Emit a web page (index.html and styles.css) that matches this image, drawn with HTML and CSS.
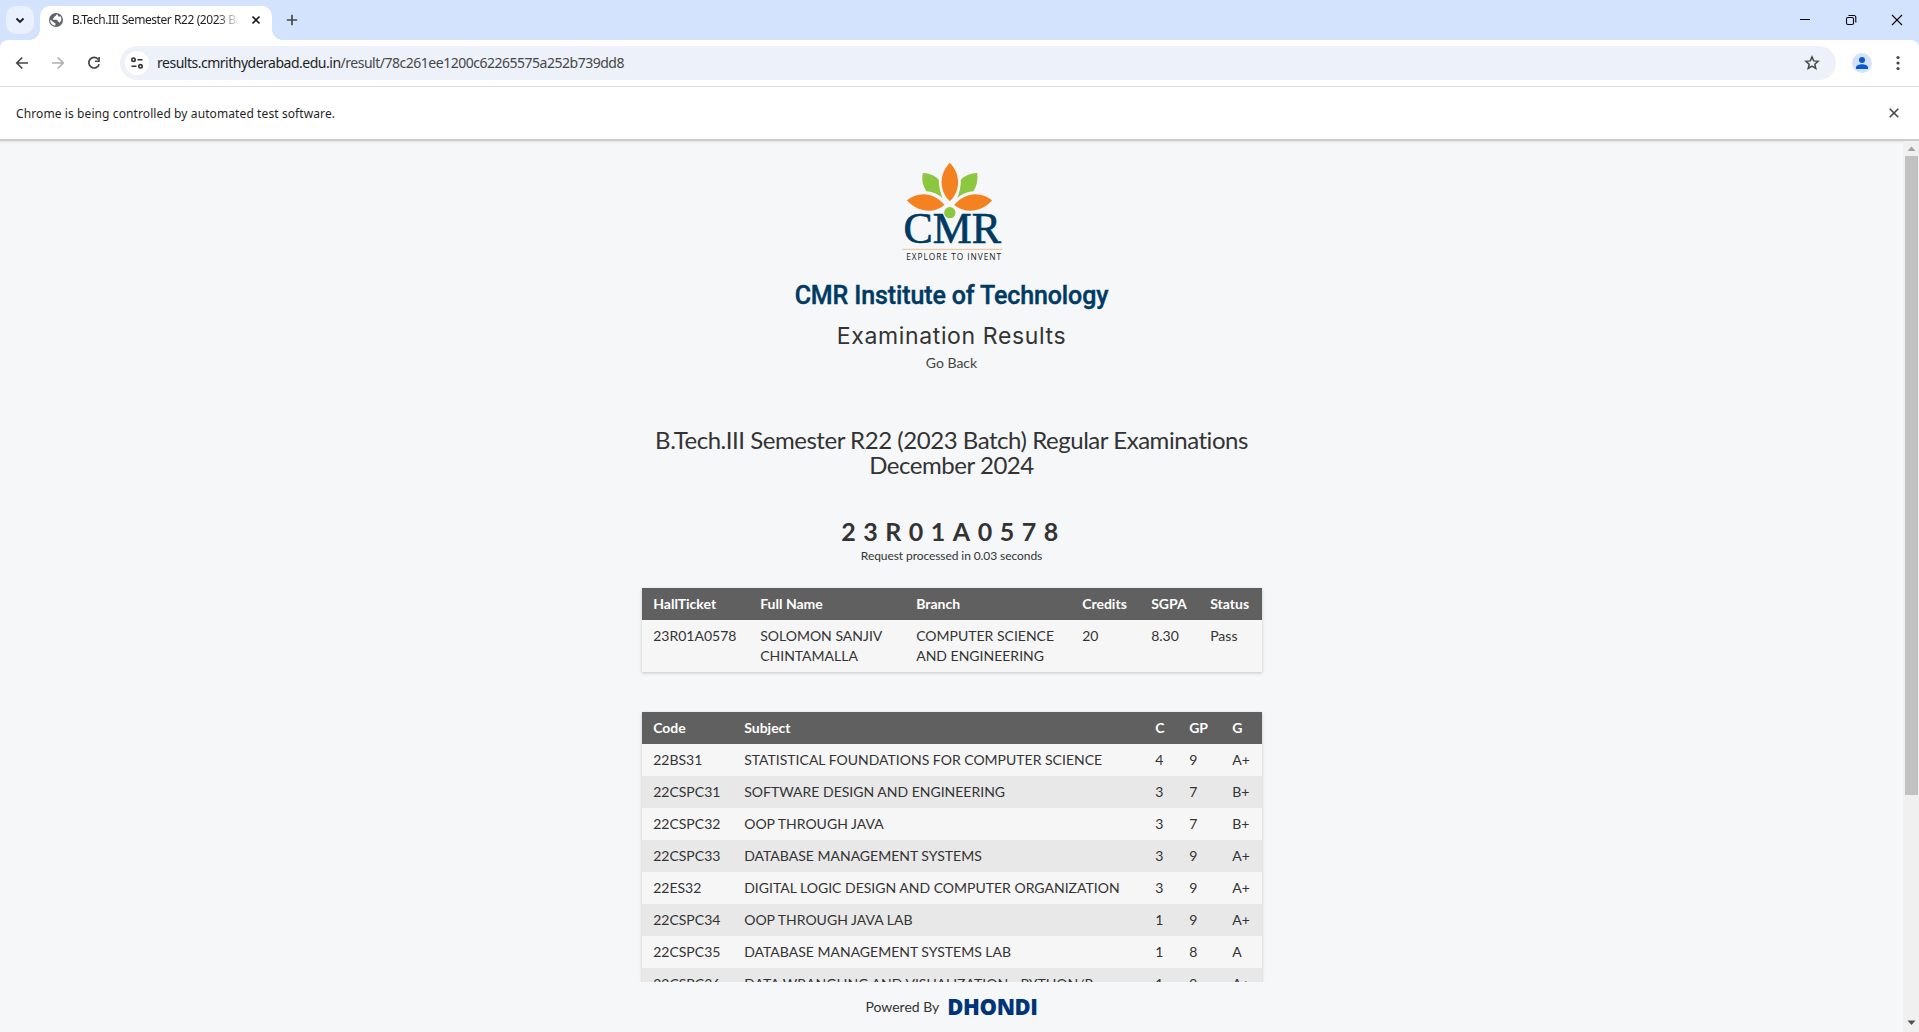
FILE: index.html
```html
<!DOCTYPE html>
<html lang="en">
<head>
<meta charset="utf-8">
<title>B.Tech.III Semester R22 (2023 Batch)</title>
<link rel="stylesheet" href="styles.css">
</head>
<body>
<div class="window">
  <header class="tabstrip">
    <div class="tab-search"><svg width="28" height="28"><path d="M10.5 12.5 14 16l3.500-3.500" fill="none" stroke="#1f1f1f" stroke-width="1.900"/></svg></div>
    <div class="tab">
      <svg class="favicon" width="14" height="14" viewBox="0 0 14 14"><circle cx="7" cy="7" r="7" fill="#5f6368"/><path d="M8.300 1.300C6.500 1.600 7.500 3 6.100 3.300 4.700 3.600 5.500 5 4.100 5.200V6.700H7.500C9.200 7 8 8.600 9.800 8.700L10.500 10C12.500 8.300 13.200 5.500 11.500 3.200 10.600 3.700 9 3.800 9.100 2.700ZM1.300 6.400 4.900 9.600 6.400 10.300V12.600C3 12.400 1 9.600 1.300 6.400Z" fill="#fff"/></svg>
      <span class="tab-title">B.Tech.III Semester R22 (2023 Batch)</span>
      <svg class="tab-close" width="10" height="10"><path d="m1.500 1.500 7 7m0-7-7 7" stroke="#1f1f1f" stroke-width="1.700"/></svg>
    </div>
    <svg class="new-tab" width="12" height="12"><path d="M6 .8v10.400M.8 6h10.400" stroke="#474747" stroke-width="1.700"/></svg>
    <div class="window-buttons">
      <svg width="46" height="40"><path d="M18 19.500h10" stroke="#000"/></svg>
      <svg width="46" height="40" fill="none" stroke="#000" stroke-width="1.100"><rect x="18.500" y="17.500" width="7" height="7" rx="1.500"/><path d="M20.500 15.500h5.500a1.800 1.800 0 0 1 1.800 1.800v5.200"/></svg>
      <svg width="46" height="40"><path d="m18 15 10 10m0-10-10 10" stroke="#000" stroke-width="1.100"/></svg>
    </div>
  </header>
  <div class="toolbar">
    <div class="nav">
      <svg width="36" height="36"><path d="M24 18H13m5.300-5.500L12.800 18l5.500 5.500" fill="none" stroke="#474747" stroke-width="1.700"/></svg>
      <svg width="36" height="36"><path d="M12 18h11m-5.300-5.500 5.500 5.500-5.500 5.500" fill="none" stroke="#b0b0b0" stroke-width="1.700"/></svg>
      <svg width="36" height="36"><path d="M22.400 14.500A5.300 5.300 0 1 0 23.200 19.300" fill="none" stroke="#474747" stroke-width="1.700"/><path d="M23.900 12v5h-5v-1.600h3.400V12z" fill="#474747"/></svg>
    </div>
    <div class="omnibox">
      <svg class="site-info" width="24" height="24"><circle cx="12" cy="12" r="12" fill="#fff"/><g fill="none" stroke="#303030" stroke-width="1.600"><circle cx="8.500" cy="8.700" r="1.700"/><path d="M12.500 8.700h5M6.500 15.300h5"/><circle cx="15.500" cy="15.300" r="1.700"/></g></svg>
      <span class="url"><b>results.cmrithyderabad.edu.in</b>/result/78c261ee1200c62265575a252b739dd8</span>
      <svg class="star" width="16" height="16" viewBox="0 0 16 16"><path d="m8 1.900 1.700 4 4.400.4-3.300 2.900 1 4.300L8 11.200l-3.800 2.300 1-4.300-3.300-2.900 4.400-.4Z" fill="none" stroke="#474747" stroke-width="1.500"/></svg>
    </div>
    <svg class="avatar" width="20" height="20"><circle cx="10" cy="10" r="10" fill="#d3e3fd"/><circle cx="10" cy="7" r="3" fill="#0b57d0"/><path d="M4 16v-1.500c0-2.300 3.500-3.300 6-3.300s6 1 6 3.300V16z" fill="#0b57d0"/></svg>
    <svg class="more" width="4" height="16" fill="#474747"><circle cx="2" cy="2.500" r="1.600"/><circle cx="2" cy="8" r="1.600"/><circle cx="2" cy="13.500" r="1.600"/></svg>
  </div>
  <div class="infobar">
    <span>Chrome is being controlled by automated test software.</span>
    <svg width="10" height="10"><path d="m.7.7 8.600 8.600m0-8.600L.7 9.300" stroke="#474747" stroke-width="1.600"/></svg>
  </div>
  <div class="viewport">
    <main class="page">
      <div class="scroll-area">
        <svg class="logo" width="180" height="120" viewBox="4.500 0 540 360">
          <path d="M268 38C301 72 301 122 268 154C235 122 235 72 268 38Z" fill="#f58220"/>
          <path d="M187 69C211 71 226 78 235 90C235 109 239 126 246 144C230 130 212 125 198 124C186 106 183 88 187 69Z" fill="#8dc63f"/>
          <path d="M350 69C326 71 311 78 301 90C301 109 298 126 290 144C307 130 325 125 339 124C350 106 353 88 350 69Z" fill="#8dc63f"/>
          <path d="M139 151C174 123 221 126 252 165C221 191 174 189 139 151Z" fill="#f58220"/>
          <path d="M395 151C361 123 313 126 281 165C313 191 361 189 395 151Z" fill="#f58220"/>
          <text class="logo-name" x="129" y="280" textLength="292" lengthAdjust="spacingAndGlyphs">CMR</text>
          <circle cx="268" cy="188" r="20" fill="#f5f7f9"/>
          <circle cx="268" cy="188" r="17" fill="#8dc63f"/>
          <path d="M126 298h300" stroke="#e9c58f" stroke-width="3"/>
          <text class="logo-motto" x="137" y="329" textLength="285">EXPLORE TO INVENT</text>
        </svg>
        <h1 class="institute">CMR Institute of Technology</h1>
        <h2 class="section">Examination Results</h2>
        <a class="back">Go Back</a>
        <h3 class="exam">B.Tech.III Semester R22 (2023 Batch) Regular Examinations<br>December 2024</h3>
        <div class="roll">23R01A0578</div>
        <div class="timing">Request processed in 0.03 seconds</div>
        <table class="grid student">
          <colgroup><col class="s1"><col class="s2"><col class="s3"><col class="s4"><col class="s5"><col class="s6"></colgroup>
          <thead><tr><th>HallTicket</th><th>Full Name</th><th>Branch</th><th>Credits</th><th>SGPA</th><th>Status</th></tr></thead>
          <tbody><tr><td>23R01A0578</td><td>SOLOMON SANJIV<br>CHINTAMALLA</td><td>COMPUTER SCIENCE<br>AND ENGINEERING</td><td>20</td><td>8.30</td><td>Pass</td></tr></tbody>
        </table>
        <table class="grid marks">
          <colgroup><col class="m1"><col class="m2"><col class="m3"><col class="m4"><col class="m5"></colgroup>
          <thead><tr><th>Code</th><th>Subject</th><th>C</th><th>GP</th><th>G</th></tr></thead>
          <tbody>
            <tr><td>22BS31</td><td>STATISTICAL FOUNDATIONS FOR COMPUTER SCIENCE</td><td>4</td><td>9</td><td>A+</td></tr>
            <tr><td>22CSPC31</td><td>SOFTWARE DESIGN AND ENGINEERING</td><td>3</td><td>7</td><td>B+</td></tr>
            <tr><td>22CSPC32</td><td>OOP THROUGH JAVA</td><td>3</td><td>7</td><td>B+</td></tr>
            <tr><td>22CSPC33</td><td>DATABASE MANAGEMENT SYSTEMS</td><td>3</td><td>9</td><td>A+</td></tr>
            <tr><td>22ES32</td><td>DIGITAL LOGIC DESIGN AND COMPUTER ORGANIZATION</td><td>3</td><td>9</td><td>A+</td></tr>
            <tr><td>22CSPC34</td><td>OOP THROUGH JAVA LAB</td><td>1</td><td>9</td><td>A+</td></tr>
            <tr><td>22CSPC35</td><td>DATABASE MANAGEMENT SYSTEMS LAB</td><td>1</td><td>8</td><td>A</td></tr>
            <tr><td>22CSPC36</td><td>DATA WRANGLING AND VISUALIZATION - PYTHON/R</td><td>1</td><td>9</td><td>A+</td></tr>
          </tbody>
        </table>
      </div>
      <footer class="powered"><span>Powered By</span><strong>DHONDI</strong></footer>
    </main>
    <div class="scrollbar">
      <svg width="16" height="15"><path d="M4.500 10h8L8.500 5.500z" fill="#a3a3a3"/></svg>
      <div class="thumb"></div>
      <svg class="down" width="16" height="18"><path d="M4.500 6.500h8L8.500 11z" fill="#505050"/></svg>
    </div>
  </div>
</div>
</body>
</html>
```
FILE: styles.css
```css
* { box-sizing: border-box; }
body { margin: 0; background: #d3e3fd; overflow: hidden; font-family: "Noto Sans", sans-serif; color: #1f1f1f; }
svg { display: block; flex: none; }
.window { height: 1032px; display: flex; flex-direction: column; }

.tabstrip { height: 40px; display: flex; align-items: center; padding-left: 6px; }
.tab-search { width: 28px; height: 28px; border-radius: 10px; background: #e9f0fe; }
.tab { position: relative; align-self: flex-end; width: 232px; height: 34px; margin-left: 6px; padding: 0 11px 6px 9px; display: flex; align-items: center; background: #fff; border-radius: 10px 10px 0 0; }
.tab::before, .tab::after { content: ""; position: absolute; bottom: 0; width: 10px; height: 10px; }
.tab::before { left: -10px; background: radial-gradient(circle at 0 0, transparent 9.500px, #fff 10px); }
.tab::after { right: -10px; background: radial-gradient(circle at 100% 0, transparent 9.500px, #fff 10px); }
.tab-title { width: 168px; margin-left: 9px; overflow: hidden; white-space: nowrap; font-size: 12px; line-height: 18px; letter-spacing: -0.430px; -webkit-mask-image: linear-gradient(90deg, #000 86%, transparent); mask-image: linear-gradient(90deg, #000 86%, transparent); }
.tab-close { margin-left: 11px; }
.new-tab { margin-left: 14px; }
.window-buttons { display: flex; margin-left: auto; margin-right: -1px; }

.toolbar { height: 47px; display: flex; align-items: center; padding: 0 19px 1px 4px; background: #fff; border-bottom: 1px solid #dddfe1; border-radius: 8px 8px 0 0; }
.nav { display: flex; }
.omnibox { width: 1716px; height: 34px; margin-left: 8px; padding: 0 16px 0 5px; display: flex; align-items: center; border-radius: 17px; background: #ecf1fa; }
.url { margin-left: 8px; font-size: 14px; line-height: 20px; letter-spacing: -0.490px; color: #474747; white-space: nowrap; }
.url b { font-weight: 400; color: #1f1f1f; }
.star { margin-left: auto; }
.avatar { margin-left: 16px; }
.more { margin-left: auto; }

.infobar { height: 52px; display: flex; align-items: center; justify-content: space-between; padding: 0 20px 0 16px; background: #fff; font-size: 12px; letter-spacing: 0.100px; }

.viewport { flex: 1; min-height: 0; display: flex; border-top: 2px solid #c9cbcc; }
.page { flex: 1; display: flex; flex-direction: column; background: linear-gradient(#e6e8ea, #f5f7f9 3px); font-family: Lato, sans-serif; color: #333; text-align: center; }
.scroll-area { height: 841px; overflow: hidden; padding-top: 9px; display: flex; flex-direction: column; align-items: center; }
.logo { height: 120px; }
.logo-name { font: 130px "Liberation Serif", serif; fill: #003a63; stroke: #003a63; stroke-width: 2px; }
.logo-motto { font: 25px "Open Sans", sans-serif; fill: #222; }
.institute { margin: 0; padding-top: 2px; height: 48px; font: 500 25px/48px Roboto, sans-serif; letter-spacing: -0.120px; color: #003a63; -webkit-text-stroke: 0.400px #003a63; }
.section { margin: 0; font: 400 23px/36px Inter, sans-serif; letter-spacing: 0.630px; }
.back { font-size: 14px; line-height: 18px; color: #444; }
.exam { margin: 55px 0 0; font-size: 24px; font-weight: 400; line-height: 25px; letter-spacing: -0.460px; }
.roll { margin: 39px 0 0 4px; font-size: 25px; font-weight: 700; line-height: 30px; letter-spacing: 7.500px; }
.timing { margin-top: 1px; font-size: 12px; line-height: 18px; letter-spacing: -0.080px; }

.grid { width: 620px; flex: none; table-layout: fixed; border-collapse: collapse; text-align: left; font-size: 14px; line-height: 20px; background: #f6f6f6; box-shadow: 0 1px 3px rgba(0, 0, 0, .2); }
.grid th, .grid td { padding: 6px 0 6px 11.700px; vertical-align: top; white-space: nowrap; }
.grid th { background: #606060; color: #fff; font-weight: 700; }
.marks tbody tr:nth-child(even) { background: #e8e8e8; }
.student { margin-top: 23px; }
.student tbody tr { height: 52px; }
.marks { margin-top: 40px; }
.s1 { width: 107px; } .s2 { width: 156px; } .s3 { width: 166px; } .s4 { width: 69px; } .s5 { width: 59px; } .s6 { width: 63px; }
.m1 { width: 91px; } .m2 { width: 411px; } .m3 { width: 34px; } .m4 { width: 43px; } .m5 { width: 41px; }

.powered { height: 50px; padding-bottom: 2px; display: flex; align-items: center; justify-content: center; gap: 8px; font-size: 14px; }
.powered strong { font: 800 22px/30px "Open Sans", sans-serif; letter-spacing: -0.400px; color: #003478; }

.scrollbar { width: 16px; display: flex; flex-direction: column; background: #f0f0f0; }
.thumb { width: 13px; height: 639px; margin-left: 2px; background: #c1c1c1; }
.down { margin-top: auto; }
```
